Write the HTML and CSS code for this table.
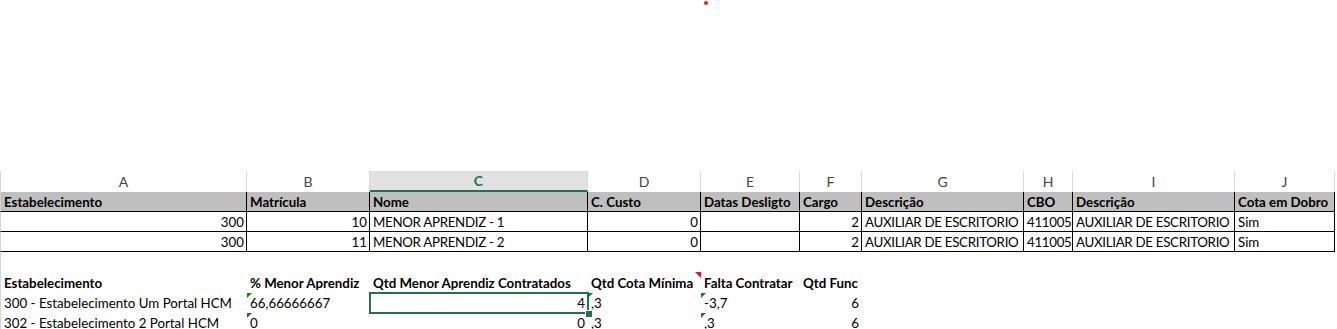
FILE: index.html
```html
<!DOCTYPE html>
<html lang="pt-BR">
<head>
<meta charset="utf-8">
<title>Planilha</title>
<link rel="stylesheet" href="styles.css">
</head>
<body>
<div class="top"><span class="dot"></span></div>
<div class="sheet">
  <div class="row colheads">
    <div class="c">A</div><div class="c">B</div><div class="c sel">C</div><div class="c">D</div><div class="c">E</div><div class="c">F</div><div class="c">G</div><div class="c">H</div><div class="c">I</div><div class="c">J</div>
  </div>
  <div class="row band">
    <div class="c">Estabelecimento</div><div class="c">Matrícula</div><div class="c">Nome</div><div class="c">C. Custo</div><div class="c">Datas Desligto</div><div class="c">Cargo</div><div class="c">Descrição</div><div class="c">CBO</div><div class="c">Descrição</div><div class="c">Cota em Dobro</div>
  </div>
  <div class="row data">
    <div class="c num">300</div><div class="c num">10</div><div class="c up">MENOR APRENDIZ - 1</div><div class="c num">0</div><div class="c"></div><div class="c num">2</div><div class="c up">AUXILIAR DE ESCRITORIO</div><div class="c up">411005</div><div class="c up">AUXILIAR DE ESCRITORIO</div><div class="c">Sim</div>
  </div>
  <div class="row data">
    <div class="c num">300</div><div class="c num">11</div><div class="c up">MENOR APRENDIZ - 2</div><div class="c num">0</div><div class="c"></div><div class="c num">2</div><div class="c up">AUXILIAR DE ESCRITORIO</div><div class="c up">411005</div><div class="c up">AUXILIAR DE ESCRITORIO</div><div class="c">Sim</div>
  </div>
  <div class="row sum">
    <div class="c"></div><div class="c"></div><div class="c"></div><div class="c"></div><div class="c"></div><div class="c"></div><div class="c"></div><div class="c"></div><div class="c"></div><div class="c"></div>
  </div>
  <div class="row sum head">
    <div class="c">Estabelecimento</div><div class="c">% Menor Aprendiz</div><div class="c">Qtd Menor Aprendiz Contratados</div><div class="c cmt">Qtd Cota Mínima</div><div class="c">Falta Contratar</div><div class="c">Qtd Func</div><div class="c"></div><div class="c"></div><div class="c"></div><div class="c"></div>
  </div>
  <div class="row sum">
    <div class="c">300 - Estabelecimento Um Portal HCM</div><div class="c err">66,66666667</div><div class="c num active">4<span class="handle"></span></div><div class="c err">,3</div><div class="c err">-3,7</div><div class="c num">6</div><div class="c"></div><div class="c"></div><div class="c"></div><div class="c"></div>
  </div>
  <div class="row sum">
    <div class="c">302 - Estabelecimento 2 Portal HCM</div><div class="c err">0</div><div class="c num">0</div><div class="c err">,3</div><div class="c err">,3</div><div class="c num">6</div><div class="c"></div><div class="c"></div><div class="c"></div><div class="c"></div>
  </div>
</div>
</body>
</html>
```
FILE: styles.css
```css
body {
  margin: 0;
  background: #fff;
  color: #000;
  font-family: Lato, "Liberation Sans", sans-serif;
  font-size: 13.3px;
}
.top {
  height: 171px;
  position: relative;
}
.dot {
  position: absolute;
  left: 704px;
  top: 1px;
  width: 4px;
  height: 4px;
  border-radius: 50%;
  background: #e8202a;
}
.row {
  display: grid;
  grid-template-columns: 247px 123px 218px 113px 99px 62px 162px 49px 162px 100px;
}
.c {
  box-sizing: border-box;
  height: 20px;
  line-height: 20px;
  padding: 0 3px;
  white-space: nowrap;
  position: relative;
}
.row .c:first-child {
  border-left: 1px solid #d4d4d4;
}
.num {
  text-align: right;
}
.up {
  letter-spacing: -0.3px;
}
.colheads .c {
  height: 21px;
  line-height: 21px;
  text-align: center;
  color: #444;
  font-size: 14px;
  border-right: 1px solid #dadada;
}
.colheads .sel {
  background: #e1e1e1;
  color: #217346;
  font-weight: bold;
  border-bottom: 2px solid #217346;
  line-height: 19px;
}
.band .c {
  background: #bfbfbf;
  font-weight: bold;
  border-right: 1px solid #000;
  border-bottom: 1px solid #000;
}
.data .c {
  border-right: 1px solid #000;
  border-bottom: 1px solid #000;
  padding: 0 2px 0 3px;
}
.sum .c {
  line-height: 22px;
}
.head .c {
  font-weight: bold;
}
.err::before {
  content: "";
  position: absolute;
  left: 0;
  top: 1px;
  border-top: 5px solid #1d7d1d;
  border-right: 5px solid transparent;
}
.cmt::after {
  content: "";
  position: absolute;
  right: 0;
  top: 0;
  border-top: 6px solid #e8102a;
  border-left: 6px solid transparent;
}
.active::after {
  content: "";
  position: absolute;
  left: -1px;
  right: -1px;
  top: 0;
  bottom: -2px;
  border: 2px solid #217346;
}
.handle {
  position: absolute;
  right: -4px;
  bottom: -5px;
  width: 6px;
  height: 6px;
  background: #217346;
  box-shadow: 0 0 0 1px #fff;
  z-index: 1;
}
```
